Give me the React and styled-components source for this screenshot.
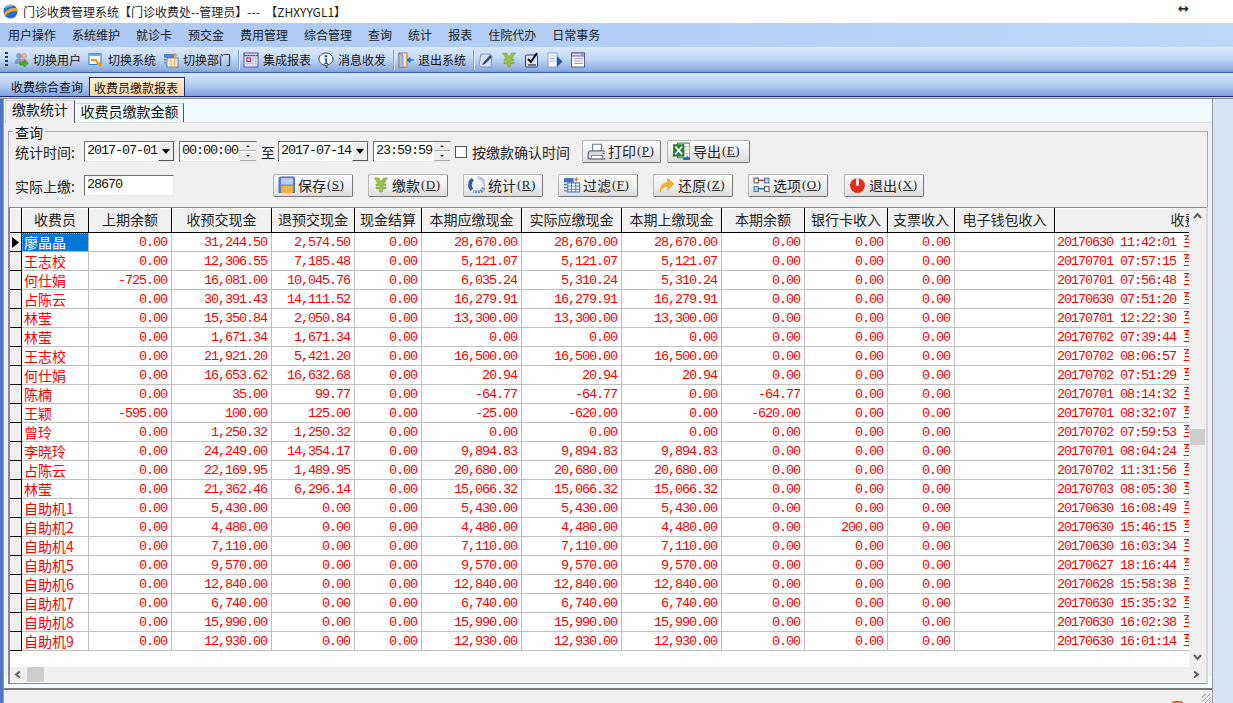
import React from "react"
import styled, { createGlobalStyle } from "styled-components"

const cjk = `"Noto Sans CJK SC", "Liberation Sans", sans-serif`
const mono = `"Liberation Mono", "Noto Sans CJK SC", monospace`

const GlobalStyle = createGlobalStyle`
    html, body {
        margin: 0;
        padding: 0;
        background: #d6e4f3;
    }
    * {
        box-sizing: border-box;
    }
`

const Page = styled.div`
    width: 1233px;
    height: 703px;
    overflow: hidden;
    display: flex;
    flex-direction: column;
    font-family: ${cjk};
    font-size: 12px;
    color: #111;
    background: #d6e4f3;
`

const TitleBar = styled.div`
    height: 23px;
    flex: none;
    display: flex;
    align-items: center;
    padding: 0 3px;
    gap: 5px;
    background: #fff;
    color: #222;
    position: relative;
    font-size: 12px;
    white-space: pre;
`

const ResizeCursor = styled.div`
    position: absolute;
    left: 1178px;
    top: 3px;
    font-size: 13px;
    line-height: 11px;
    font-weight: 700;
    font-family: "DejaVu Sans", sans-serif;
`

const MenuBar = styled.div`
    height: 24px;
    flex: none;
    display: flex;
    align-items: center;
    padding: 0 0 2px 8px;
    gap: 16px;
    background: linear-gradient(to right, #abc7f3, #bdd7f9);
    color: #1a1a1a;
`

const Toolbar = styled.div`
    height: 26px;
    flex: none;
    display: flex;
    align-items: center;
    padding-left: 5px;
    background: linear-gradient(to bottom, #dbe9fc, #c5d9f6 45%, #8fb0e3 90%, #7c9fd8);
    border-bottom: 1px solid #3c62a8;
`

const Grip = styled.div`
    width: 3px;
    height: 16px;
    margin-right: 5px;
    background: repeating-linear-gradient(to bottom, #26365a 0 2px, transparent 2px 4px);
`

const ToolItem = styled.div`
    display: flex;
    align-items: center;
    gap: 4px;
    margin-right: ${(p) => p.$gap ?? 7}px;
    white-space: nowrap;
`

const ToolSep = styled.div`
    width: 1px;
    height: 20px;
    margin: 0 4px 0 0;
    background: #7f9fd0;
    box-shadow: 1px 0 0 #e4eefc;
`

const DocTabs = styled.div`
    height: 23px;
    flex: none;
    display: flex;
    align-items: flex-end;
    background: linear-gradient(to bottom, #d6e6fb, #b6cef2 50%, #7da3de);
`

const DocTab = styled.div`
    height: 19px;
    padding: 0 ${(p) => (p.$active ? "4px" : "5px")};
    margin-left: ${(p) => (p.$active ? "0" : "6px")};
    line-height: 20px;
    color: #111;
    width: ${(p) => (p.$active ? "96px" : "83px")};
    white-space: nowrap;
    ${(p) =>
        p.$active &&
        `
        background: linear-gradient(to bottom, #fff3dc, #fdd49b);
        border: 1px solid #1b2a6b;
        border-bottom: none;
    `}
`

const AccentLine = styled.div`
    height: 3px;
    flex: none;
    background: linear-gradient(to bottom, #1b2a6b 0 1px, #fdc98a 1px 2px, #8a8a8a 2px 3px);
`

const Body = styled.div`
    flex: 1;
    display: flex;
    min-height: 0;
`

const LeftEdge = styled.div`
    width: 3px;
    flex: none;
    background: #4a76c4;
`

const Workspace = styled.div`
    width: 1210px;
    flex: none;
    display: flex;
    flex-direction: column;
    border-left: 1px solid #9a9a9a;
    border-right: 1px solid #9a9a9a;
    background: #f0f0f0;
`

const SubTabs = styled.div`
    height: 24px;
    flex: none;
    display: flex;
    align-items: flex-end;
    padding-left: 1px;
    background: #f0fbff;
    border-bottom: 1px solid #e4e4e4;
`

const SubTab = styled.div`
    font-size: 14px;
    white-space: nowrap;
    text-align: center;
    width: ${(p) => (p.$active ? "70px" : "109px")};
    height: ${(p) => (p.$active ? "23px" : "19px")};
    line-height: ${(p) => (p.$active ? "17px" : "15px")};
    background: ${(p) => (p.$active ? "#f0f0f0" : "#f0fbff")};
    border-top: 1px solid #d0d0d0;
    border-left: 1px solid ${(p) => (p.$active ? "#d8d8d8" : "transparent")};
    border-right: 1px solid #555;
    margin-bottom: ${(p) => (p.$active ? "-1px" : "0")};
`

const Pane = styled.div`
    flex: 1;
    min-height: 0;
    display: flex;
    flex-direction: column;
    padding: 8px 4px 0 4px;
    border-bottom: 2px solid #7a7a7a;
    background: linear-gradient(to bottom, #f0f0f0 0 553px, #f4fbff 553px);
`

const QueryBox = styled.div`
    position: relative;
    height: 76px;
    flex: none;
    border: 1px solid #a8a8a8;
    border-bottom: none;
    padding: 8px 0 0 6px;
    display: flex;
    flex-direction: column;
    gap: 11px;
`

const Legend = styled.div`
    position: absolute;
    left: 4px;
    top: -8px;
    padding: 0 2px;
    background: #f0f0f0;
    font-size: 14px;
    line-height: 16px;
`

const FormRow = styled.div`
    display: flex;
    align-items: center;
    height: 23px;
    font-size: 14px;
    white-space: nowrap;
`

const Label = styled.span`
    width: ${(p) => p.$w}px;
    flex: none;
    color: #222;
    margin-left: ${(p) => p.$ml ?? 0}px;
`

const SunkenField = styled.div`
    width: ${(p) => p.$w}px;
    height: ${(p) => p.$h ?? 21}px;
    flex: none;
    margin-right: ${(p) => p.$mr ?? 0}px;
    display: flex;
    align-items: stretch;
    background: #fff;
    border: 1px solid #6e6e6e;
    border-right-color: #e8e8e8;
    border-bottom-color: #e8e8e8;
    font-family: ${mono};
    font-size: 13.5px;
    letter-spacing: -1.1px;
    line-height: 18px;
    padding-left: 2px;
    overflow: hidden;
`

const FieldText = styled.span`
    flex: 1;
    min-width: 0;
    overflow: hidden;
`

const ComboArrow = styled.div`
    width: 16px;
    flex: none;
    background: #ececec;
    border: 1px solid #555;
    border-top-color: #fff;
    border-left-color: #fff;
    display: flex;
    align-items: center;
    justify-content: center;
    &::after {
        content: "";
        border: 4px solid transparent;
        border-top: 5px solid #000;
        border-bottom: none;
    }
`

const Spin = styled.div`
    width: 16px;
    flex: none;
    display: flex;
    flex-direction: column;
    gap: 1px;
    background: #fff;
`

const SpinPart = styled.div`
    flex: 1;
    background: #efefef;
    border-bottom: 1px solid #aaa;
    display: flex;
    align-items: center;
    justify-content: center;
    &::after {
        content: "";
        border: 2px solid transparent;
        ${(p) =>
            p.$up
                ? "border-bottom: 2px solid #333; border-top: none;"
                : "border-top: 2px solid #333; border-bottom: none;"}
    }
`

const Check = styled.div`
    width: 12px;
    height: 12px;
    flex: none;
    margin: 0 5px 0 4px;
    background: #fff;
    border: 1px solid #555;
`

const Btn = styled.div`
    width: ${(p) => p.$w ?? 80}px;
    height: 23px;
    flex: none;
    margin-left: ${(p) => p.$ml ?? 0}px;
    display: flex;
    align-items: center;
    gap: 3px;
    padding: 0 0 2px 4px;
    font-size: 14px;
    color: #222;
    background: linear-gradient(to bottom, #fbfbfb, #ececec 60%, #dcdcdc);
    border: 1px solid #767676;
    border-top-color: #b5b5b5;
    border-left-color: #b5b5b5;
    border-radius: 2px;
`

const Hot = styled.span`
    font-family: "Liberation Serif", serif;
    font-size: 13px;
    letter-spacing: 0.5px;
    margin-left: -2px;
    & u {
        text-underline-offset: 1px;
    }
`

const GridFrame = styled.div`
    position: relative;
    height: 477px;
    flex: none;
    border: 1px solid #8a8a8a;
    border-right: 2px solid #d8d8d8;
    border-left: 2px solid #8a8a8a;
    background: #fff;
    overflow: hidden;
`

const GridClip = styled.div`
    width: 1181px;
    height: 459px;
    overflow: hidden;
`

const Table = styled.table`
    border-collapse: separate;
    border-spacing: 0;
    table-layout: fixed;
    width: 1333px;
`

const Head = styled.th`
    height: 25px;
    padding: 0 0 2px;
    font-weight: 400;
    font-size: 14px;
    color: #222;
    background: #f0f0f0;
    border-right: 1px solid #000;
    border-bottom: 1px solid #000;
    box-shadow: inset 1px 1px 0 #fff;
    white-space: nowrap;
    overflow: hidden;
`

const RowMark = styled.td`
    height: 19px;
    padding: 0 0 0 2px;
    background: #f0f0f0;
    border-right: 1px solid #000;
    border-bottom: 1px solid #000;
    line-height: 0;
`

const Cell = styled.td`
    height: 19px;
    padding: 1px ${(p) => (p.$left ? "1px" : "4px")} 0 ${(p) => (p.$left ? "2px" : "0")};
    color: #f00;
    font-family: ${mono};
    font-size: 13.5px;
    letter-spacing: -1.1px;
    line-height: 16px;
    text-align: ${(p) => (p.$left ? "left" : "right")};
    white-space: nowrap;
    overflow: hidden;
    border-right: 1px solid #c0c0c0;
    border-bottom: 1px solid #c0c0c0;
`

const NameCell = styled(Cell)`
    padding-top: 0;
    padding-bottom: 1px;
    font-size: 14px;
    letter-spacing: 0;
    font-family: ${cjk};
    ${(p) =>
        p.$selected &&
        `
        background: #0078d7;
        color: #fff;
        outline: 1px dotted #f5a623;
        outline-offset: -1px;
    `}
`

const VScroll = styled.div`
    position: absolute;
    right: 0;
    top: 0;
    bottom: 16px;
    width: 17px;
    background: #f0f0f0;
    display: flex;
    flex-direction: column;
    align-items: center;
    justify-content: space-between;
    padding: 4px 0 6px;
`

const HScroll = styled.div`
    position: absolute;
    left: 0;
    right: 0;
    bottom: 1px;
    height: 15px;
    background: #f0f0f0;
    display: flex;
    align-items: center;
    justify-content: space-between;
    padding: 0 6px 0 4px;
`

const Thumb = styled.div`
    position: absolute;
    background: #cdcdcd;
    ${(p) =>
        p.$vertical
            ? "right: 1px; top: 221px; width: 15px; height: 16px;"
            : "left: 17px; bottom: 0; width: 17px; height: 15px;"}
`

const StatusBar = styled.div`
    height: 13px;
    flex: none;
    position: relative;
    background: #f0f0f0;
`

const Flame = styled.div`
    position: absolute;
    left: 1168px;
    top: 11px;
    width: 11px;
    height: 2px;
    border-radius: 6px 6px 0 0;
    background: #f26a21;
`

const SizeGrip = styled.div`
    position: absolute;
    right: 1px;
    bottom: 0;
    width: 9px;
    height: 9px;
    background: repeating-linear-gradient(135deg, transparent 0 2px, #a8a8a8 2px 3px);
`

const Ico = ({ children, s = 16 }) => (
    <svg width={s} height={s} viewBox="0 0 16 16" style={{ flex: "none", display: "block" }}>
        {children}
    </svg>
)

const LogoIcon = () => (
    <Ico s={15}>
        <circle cx="8" cy="8" r="7.5" fill="#1f6fd0" />
        <path d="M1 10C5 5 10 4 15 4.5 15.5 6 15.6 7 15.5 8 10 7 5 9 2.5 13 1.5 12 1.2 11 1 10Z" fill="#f4a11d" />
        <path d="M3 3C5 1 9 0 12 2 8 2 5 3 2.5 5Z" fill="#7fc0f5" />
    </Ico>
)

const UsersIcon = () => (
    <Ico>
        <circle cx="6" cy="4" r="2.4" fill="#8aa8d8" stroke="#5a78a8" strokeWidth=".6" />
        <circle cx="11" cy="4" r="2.4" fill="#f0b8a0" stroke="#c07a60" strokeWidth=".6" />
        <path d="M1.5 12c0-4 2-5.5 4.5-5.5S9 8 9 10v2Z" fill="#7d9ad0" />
        <path d="M8 7h5c1.5 1 2 2 2 3H9Z" fill="#e58d78" />
        <path d="M7 10h4V8l4 3.5-4 3.5v-2H7Z" fill="#4fae32" stroke="#2d7a1c" strokeWidth=".6" />
    </Ico>
)

const SwitchIcon = () => (
    <Ico>
        <rect x="1" y="1.5" width="12" height="11" fill="#fff" stroke="#2f7fbf" />
        <rect x="1" y="1.5" width="12" height="2.5" fill="#67b2e8" />
        <path d="M3 8h5l2 4h3" fill="none" stroke="#e79a12" strokeWidth="2" />
        <path d="M11 9.5l4 2.5-4 3Z" fill="#e79a12" />
    </Ico>
)

const DeptIcon = () => (
    <Ico>
        <rect x="1" y="2" width="10" height="4" fill="#5a86c8" />
        <path d="M12 1v4M10.5 3h4" stroke="#e08a2a" />
        <rect x="4" y="6" width="11" height="9" fill="#fff" stroke="#5a7fb8" />
        <path d="M4 9h11M4 12h11M8 6v9M11.5 6v9" stroke="#e8a53a" strokeWidth=".8" />
        <rect x="1" y="7" width="2" height="1.5" fill="#5a86c8" />
        <rect x="1" y="10" width="2" height="1.5" fill="#5a86c8" />
    </Ico>
)

const ReportIcon = () => (
    <Ico>
        <rect x="1" y="1" width="14" height="14" fill="#eceafc" stroke="#4f4f9a" />
        <path d="M1 3.5h14" stroke="#4f4f9a" strokeWidth="1.4" />
        <path d="M1 6.5h14M1 9h14M1 11.5h14M4 3v12M7 3v12M10 3v12M12.5 3v12" stroke="#b9b6e4" strokeWidth=".7" />
        <rect x="4" y="6" width="3.4" height="3.4" fill="#fff" stroke="#b11616" />
    </Ico>
)

const InfoIcon = () => (
    <Ico>
        <path d="M8 1C4 1 1 3.5 1 7s3 6 6 6l2 3v-3c3-.5 6-3 6-6S12 1 8 1Z" fill="#fff" stroke="#24406f" />
        <circle cx="8" cy="4.2" r="1.3" fill="#1f4fa0" />
        <path d="M6.5 6.5h2.6v4.5h1v1H6.4v-1h1V7.5h-1Z" fill="#1f4fa0" />
    </Ico>
)

const ExitDoorIcon = () => (
    <Ico>
        <rect x="1" y="1" width="8" height="14" fill="#e8e8f2" stroke="#7a7a9a" />
        <path d="M1 1l4 2v13l-4-1Z" fill="#b7bfd8" stroke="#6a6a8a" strokeWidth=".6" />
        <rect x="8" y="1" width="1.6" height="14" fill="#e6a93c" />
        <path d="M15.5 8H12V5.5L9 8l3 2.5V8Z" fill="#0a78d8" stroke="#0a78d8" />
    </Ico>
)

const EditIcon = () => (
    <Ico>
        <path d="M3 2h9l2 2-1 11H3L1 13Z" fill="#d7e2f4" stroke="#7d95bd" />
        <path d="M5 11l7-8 2 2-7 7-3 1Z" fill="#35477d" />
    </Ico>
)

const YenIcon = () => (
    <Ico>
        <path
            d="M1.5 1h4.2L8 5l2.3-4h4.2L10.7 7H13v1.6H9.4V10H13v1.7H9.4V15H6.6v-3.3H3V10h3.6V8.6H3V7h2.3Z"
            fill="#9cc24a"
            stroke="#6f9a2a"
            strokeWidth=".5"
        />
    </Ico>
)

const CheckDocIcon = () => (
    <Ico>
        <rect x="1.5" y="3" width="12" height="12" rx="1" fill="#dfe6fa" stroke="#2f3b86" />
        <path d="M4 7l3 3 6-9" fill="none" stroke="#000" strokeWidth="2" />
        <path d="M4 13h8" stroke="#000" />
    </Ico>
)

const DocArrowIcon = () => (
    <Ico>
        <path d="M1 1h9v14H1Z" fill="#fff" stroke="#7f9fd0" />
        <path d="M3 4h5M3 6.5h5M3 9h5" stroke="#9db6dc" />
        <path d="M10 4l5.5 5.5L10 15Z" fill="#1f5fa8" />
    </Ico>
)

const WindowIcon = () => (
    <Ico>
        <rect x="1.5" y="1" width="13" height="14" fill="#fff" stroke="#5a5a92" />
        <rect x="1.5" y="1" width="13" height="3" fill="#e2e2f2" stroke="#5a5a92" />
        <rect x="11" y="1.5" width="2.5" height="2" fill="#8f8fc0" />
        <path d="M4 6.5h9M4 9h9M4 11.5h9" stroke="#9a9ad0" />
    </Ico>
)

const SaveIcon = () => (
    <Ico s={17}>
        <rect x="1" y="1" width="15" height="15" rx="1.5" fill="#5d86c6" stroke="#4a6ea8" />
        <rect x="3" y="2" width="11" height="6" fill="#b9d0ee" />
        <rect x="3" y="9" width="11" height="7" fill="#f0b23c" />
    </Ico>
)

const PrintIcon = () => (
    <Ico s={18}>
        <path d="M5 2h8v6H5Z" fill="#fff" stroke="#6a7a92" />
        <path d="M2 8h14l1 3v4H1v-4Z" fill="#d9dde4" stroke="#5e6670" />
        <path d="M4 12h10v3H4Z" fill="#fff" stroke="#8a8a8a" />
        <rect x="14" y="9.5" width="1.4" height="1.2" fill="#d33" />
    </Ico>
)

const ExcelIcon = () => (
    <Ico s={18}>
        <rect x="5" y="1" width="11" height="13" fill="#fff" stroke="#3e8a46" />
        <path d="M5 4h11M5 7h11M5 10h11M10 1v13" stroke="#8cc08f" strokeWidth=".7" />
        <rect x="1" y="2" width="10" height="11" fill="#2a7d34" />
        <path d="M3 4l6 7M9 4l-6 7" stroke="#fff" strokeWidth="1.6" />
        <path d="M10 14h3v-2l4 3-4 3v-2h-3Z" fill="#1f6fc4" />
    </Ico>
)

const RefreshIcon = () => (
    <Ico s={17}>
        <path d="M9 1.5a7 7 0 0 1 6.5 8" fill="none" stroke="#b9c9e4" strokeWidth="3" />
        <path d="M15 11a7 7 0 0 1-10 3.5" fill="none" stroke="#6f8fc4" strokeWidth="3.4" strokeDasharray="2 .8" />
        <path d="M3.5 13a7 7 0 0 1 1-10" fill="none" stroke="#2d5fa8" strokeWidth="3.4" />
    </Ico>
)

const FilterIcon = () => (
    <Ico s={17}>
        <rect x="1" y="2" width="9" height="4" fill="#3f6fb8" />
        <path d="M12.5 1v4M10.5 3h4" stroke="#d56a2a" />
        <rect x="4.5" y="6.5" width="11" height="8.5" fill="#fff" stroke="#3f6fb8" />
        <path d="M4.5 9.5h11M4.5 12.5h11M8 6.5v8.5M12 6.5v8.5" stroke="#3f6fb8" strokeWidth=".8" />
        <path d="M1 8h2.5M1 11h2.5M1 14h2.5" stroke="#3f6fb8" strokeWidth="1.2" />
    </Ico>
)

const UndoIcon = () => (
    <Ico s={17}>
        <path d="M2 15C2 9 5.5 6 9 6V2l6 5.5L9 13V9.5c-3 0-5 2-7 5.5Z" fill="#f3ae2e" stroke="#e0951a" strokeWidth=".5" />
    </Ico>
)

const OptionsIcon = () => (
    <Ico s={17}>
        <rect x="1" y="2" width="4" height="4.5" fill="#fff" stroke="#555" />
        <rect x="11" y="2" width="4" height="4.5" fill="#b8d4ee" stroke="#3f78b8" />
        <rect x="1" y="10" width="4" height="4.5" fill="#b8d4ee" stroke="#3f78b8" />
        <rect x="11" y="10" width="4" height="4.5" fill="#fff" stroke="#555" />
        <path d="M5 4h6" stroke="#c0392b" strokeWidth="1.3" />
        <path d="M5 12h6" stroke="#1f5fa8" strokeWidth="1.3" />
    </Ico>
)

const PowerIcon = () => (
    <Ico s={17}>
        <circle cx="8" cy="9" r="7" fill="#dd2e1c" />
        <rect x="6.8" y="2" width="2.4" height="7.5" rx="1" fill="#fff" />
    </Ico>
)

const Chevron = ({ d }) => (
    <svg width="9" height="7" viewBox="0 0 9 7" style={{ display: "block" }}>
        <path d={d} fill="none" stroke="#606060" strokeWidth="2" />
    </svg>
)

const menus = ["用户操作", "系统维护", "就诊卡", "预交金", "费用管理", "综合管理", "查询", "统计", "报表", "住院代办", "日常事务"]

const columns = [
    ["", 12],
    ["收费员", 67],
    ["上期余额", 83],
    ["收预交现金", 100],
    ["退预交现金", 83],
    ["现金结算", 67],
    ["本期应缴现金", 100],
    ["实际应缴现金", 100],
    ["本期上缴现金", 100],
    ["本期余额", 83],
    ["银行卡收入", 83],
    ["支票收入", 67],
    ["电子钱包收入", 100],
    ["收费时间", 288],
]

// name, previous, received, refunded, due, actual, paid, balance, bank, time
const rows = [
    ["廖晶晶", "0.00", "31,244.50", "2,574.50", "28,670.00", "28,670.00", "28,670.00", "0.00", "0.00", "20170630 11:42:01"],
    ["王志校", "0.00", "12,306.55", "7,185.48", "5,121.07", "5,121.07", "5,121.07", "0.00", "0.00", "20170701 07:57:15"],
    ["何仕娟", "-725.00", "16,081.00", "10,045.76", "6,035.24", "5,310.24", "5,310.24", "0.00", "0.00", "20170701 07:56:48"],
    ["占陈云", "0.00", "30,391.43", "14,111.52", "16,279.91", "16,279.91", "16,279.91", "0.00", "0.00", "20170630 07:51:20"],
    ["林莹", "0.00", "15,350.84", "2,050.84", "13,300.00", "13,300.00", "13,300.00", "0.00", "0.00", "20170701 12:22:30"],
    ["林莹", "0.00", "1,671.34", "1,671.34", "0.00", "0.00", "0.00", "0.00", "0.00", "20170702 07:39:44"],
    ["王志校", "0.00", "21,921.20", "5,421.20", "16,500.00", "16,500.00", "16,500.00", "0.00", "0.00", "20170702 08:06:57"],
    ["何仕娟", "0.00", "16,653.62", "16,632.68", "20.94", "20.94", "20.94", "0.00", "0.00", "20170702 07:51:29"],
    ["陈楠", "0.00", "35.00", "99.77", "-64.77", "-64.77", "0.00", "-64.77", "0.00", "20170701 08:14:32"],
    ["王颖", "-595.00", "100.00", "125.00", "-25.00", "-620.00", "0.00", "-620.00", "0.00", "20170701 08:32:07"],
    ["曾玲", "0.00", "1,250.32", "1,250.32", "0.00", "0.00", "0.00", "0.00", "0.00", "20170702 07:59:53"],
    ["李晓玲", "0.00", "24,249.00", "14,354.17", "9,894.83", "9,894.83", "9,894.83", "0.00", "0.00", "20170701 08:04:24"],
    ["占陈云", "0.00", "22,169.95", "1,489.95", "20,680.00", "20,680.00", "20,680.00", "0.00", "0.00", "20170702 11:31:56"],
    ["林莹", "0.00", "21,362.46", "6,296.14", "15,066.32", "15,066.32", "15,066.32", "0.00", "0.00", "20170703 08:05:30"],
    ["自助机1", "0.00", "5,430.00", "0.00", "5,430.00", "5,430.00", "5,430.00", "0.00", "0.00", "20170630 16:08:49"],
    ["自助机2", "0.00", "4,480.00", "0.00", "4,480.00", "4,480.00", "4,480.00", "0.00", "200.00", "20170630 15:46:15"],
    ["自助机4", "0.00", "7,110.00", "0.00", "7,110.00", "7,110.00", "7,110.00", "0.00", "0.00", "20170630 16:03:34"],
    ["自助机5", "0.00", "9,570.00", "0.00", "9,570.00", "9,570.00", "9,570.00", "0.00", "0.00", "20170627 18:16:44"],
    ["自助机6", "0.00", "12,840.00", "0.00", "12,840.00", "12,840.00", "12,840.00", "0.00", "0.00", "20170628 15:58:38"],
    ["自助机7", "0.00", "6,740.00", "0.00", "6,740.00", "6,740.00", "6,740.00", "0.00", "0.00", "20170630 15:35:32"],
    ["自助机8", "0.00", "15,990.00", "0.00", "15,990.00", "15,990.00", "15,990.00", "0.00", "0.00", "20170630 16:02:38"],
    ["自助机9", "0.00", "12,930.00", "0.00", "12,930.00", "12,930.00", "12,930.00", "0.00", "0.00", "20170630 16:01:14"],
]

const DateField = ({ value, mr }) => (
    <SunkenField $w={91} $mr={mr}>
        <FieldText>{value}</FieldText>
        <ComboArrow />
    </SunkenField>
)

const TimeField = ({ value, mr }) => (
    <SunkenField $w={78} $mr={mr}>
        <FieldText>{value}</FieldText>
        <Spin>
            <SpinPart $up />
            <SpinPart />
        </Spin>
    </SunkenField>
)

const ActionButton = ({ icon, text, hot, w, ml }) => (
    <Btn $w={w} $ml={ml}>
        {icon}
        {text}
        <Hot>
            (<u>{hot}</u>)
        </Hot>
    </Btn>
)

const App = () => {
    return (
        <Page>
            <GlobalStyle />
            <TitleBar>
                <LogoIcon />
                <span>门诊收费管理系统【门诊收费处--管理员】---  【ZHXYYGL1】</span>
                <ResizeCursor>↔</ResizeCursor>
            </TitleBar>
            <MenuBar>
                {menus.map((m) => (
                    <span key={m}>{m}</span>
                ))}
            </MenuBar>
            <Toolbar>
                <Grip />
                <ToolItem><UsersIcon />切换用户</ToolItem>
                <ToolItem><SwitchIcon />切换系统</ToolItem>
                <ToolItem><DeptIcon />切换部门</ToolItem>
                <ToolSep />
                <ToolItem><ReportIcon />集成报表</ToolItem>
                <ToolItem><InfoIcon />消息收发</ToolItem>
                <ToolSep />
                <ToolItem><ExitDoorIcon />退出系统</ToolItem>
                <ToolSep />
                <ToolItem $gap={7}><EditIcon /></ToolItem>
                <ToolItem $gap={7}><YenIcon /></ToolItem>
                <ToolItem $gap={7}><CheckDocIcon /></ToolItem>
                <ToolItem $gap={7}><DocArrowIcon /></ToolItem>
                <ToolItem $gap={7}><WindowIcon /></ToolItem>
            </Toolbar>
            <DocTabs>
                <DocTab>收费综合查询</DocTab>
                <DocTab $active>收费员缴款报表</DocTab>
            </DocTabs>
            <AccentLine />
            <Body>
                <LeftEdge />
                <Workspace>
                    <SubTabs>
                        <SubTab $active>缴款统计</SubTab>
                        <SubTab>收费员缴款金额</SubTab>
                    </SubTabs>
                    <Pane>
                        <QueryBox>
                            <Legend>查询</Legend>
                            <FormRow>
                                <Label $w={69}>统计时间:</Label>
                                <DateField value="2017-07-01" mr={4} />
                                <TimeField value="00:00:00" mr={4} />
                                <Label $w={17}>至</Label>
                                <DateField value="2017-07-14" mr={4} />
                                <TimeField value="23:59:59" />
                                <Check />
                                <Label $w={110}>按缴款确认时间</Label>
                                <ActionButton icon={<PrintIcon />} text="打印" hot="P" w={79} />
                                <ActionButton icon={<ExcelIcon />} text="导出" hot="E" w={83} ml={6} />
                            </FormRow>
                            <FormRow>
                                <Label $w={69}>实际上缴:</Label>
                                <SunkenField $w={90}>{"28670"}</SunkenField>
                                <ActionButton icon={<SaveIcon />} text="保存" hot="S" ml={99} />
                                <ActionButton icon={<YenIcon />} text="缴款" hot="D" ml={15} />
                                <ActionButton icon={<RefreshIcon />} text="统计" hot="R" ml={15} />
                                <ActionButton icon={<FilterIcon />} text="过滤" hot="F" ml={15} />
                                <ActionButton icon={<UndoIcon />} text="还原" hot="Z" ml={15} />
                                <ActionButton icon={<OptionsIcon />} text="选项" hot="O" ml={15} />
                                <ActionButton icon={<PowerIcon />} text="退出" hot="X" ml={16} />
                            </FormRow>
                        </QueryBox>
                        <GridFrame>
                            <GridClip>
                                <Table>
                                    <colgroup>
                                        {columns.map(([name, w]) => (
                                            <col key={name} style={{ width: w }} />
                                        ))}
                                    </colgroup>
                                    <thead>
                                        <tr>
                                            {columns.map(([name]) => (
                                                <Head key={name}>{name}</Head>
                                            ))}
                                        </tr>
                                    </thead>
                                    <tbody>
                                        {rows.map((r, i) => (
                                            <tr key={i}>
                                                <RowMark>
                                                    {i === 0 && (
                                                        <svg width="7" height="11" viewBox="0 0 7 11">
                                                            <path d="M0 0l7 5.5L0 11Z" fill="#000" />
                                                        </svg>
                                                    )}
                                                </RowMark>
                                                <NameCell $left $selected={i === 0}>{r[0]}</NameCell>
                                                <Cell>{r[1]}</Cell>
                                                <Cell>{r[2]}</Cell>
                                                <Cell>{r[3]}</Cell>
                                                <Cell>0.00</Cell>
                                                <Cell>{r[4]}</Cell>
                                                <Cell>{r[5]}</Cell>
                                                <Cell>{r[6]}</Cell>
                                                <Cell>{r[7]}</Cell>
                                                <Cell>{r[8]}</Cell>
                                                <Cell>0.00</Cell>
                                                <Cell />
                                                <Cell $left>{r[9]} 至</Cell>
                                            </tr>
                                        ))}
                                    </tbody>
                                </Table>
                            </GridClip>
                            <VScroll>
                                <Chevron d="M1 6l3.5-4L8 6" />
                                <Thumb $vertical />
                                <Chevron d="M1 1l3.5 4L8 1" />
                            </VScroll>
                            <HScroll>
                                <Chevron d="M6 0.5L2 3.5l4 3" />
                                <Thumb />
                                <Chevron d="M3 0.5L7 3.5l-4 3" />
                            </HScroll>
                        </GridFrame>
                    </Pane>
                    <StatusBar>
                        <Flame />
                        <SizeGrip />
                    </StatusBar>
                </Workspace>
            </Body>
        </Page>
    )
}

export default App
